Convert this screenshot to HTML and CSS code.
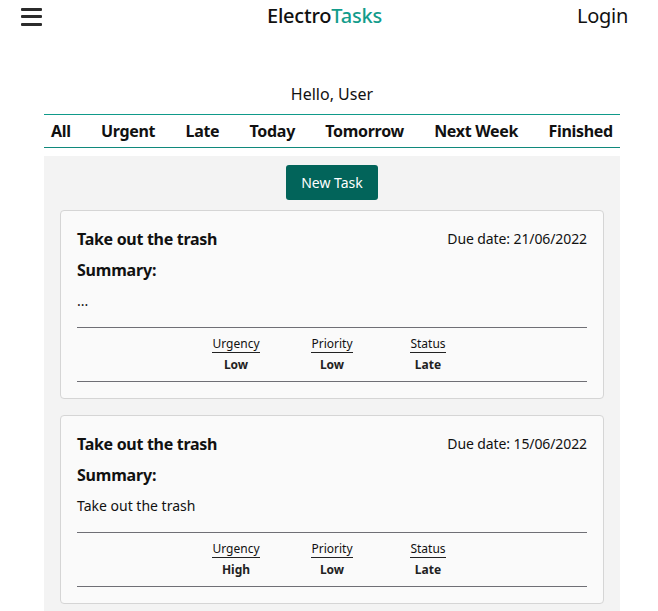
FILE: index.html
```html
<!DOCTYPE html>
<html lang="en">
<head>
<meta charset="utf-8">
<title>ElectroTasks</title>
<link rel="stylesheet" href="styles.css">
</head>
<body>
<header class="topbar">
  <button class="menu-btn" aria-label="Menu">
    <span class="bar"></span><span class="bar"></span><span class="bar"></span>
  </button>
  <div class="brand">Electro<span class="brand-accent">Tasks</span></div>
  <a class="login" href="#">Login</a>
</header>
<main class="main">
  <p class="greeting">Hello, User</p>
  <nav class="tabs">
    <a href="#" class="tab">All</a>
    <a href="#" class="tab">Urgent</a>
    <a href="#" class="tab">Late</a>
    <a href="#" class="tab">Today</a>
    <a href="#" class="tab">Tomorrow</a>
    <a href="#" class="tab">Next Week</a>
    <a href="#" class="tab">Finished</a>
  </nav>
  <section class="board">
    <button class="new-task">New Task</button>
    <article class="card">
      <div class="card-head">
        <h2 class="card-title">Take out the trash</h2>
        <span class="due">Due date: 21/06/2022</span>
      </div>
      <h3 class="summary-label">Summary:</h3>
      <p class="summary">...</p>
      <div class="stats">
        <div class="stat"><span class="stat-label">Urgency</span><span class="stat-value">Low</span></div>
        <div class="stat"><span class="stat-label">Priority</span><span class="stat-value">Low</span></div>
        <div class="stat"><span class="stat-label">Status</span><span class="stat-value">Late</span></div>
      </div>
    </article>
    <article class="card">
      <div class="card-head">
        <h2 class="card-title">Take out the trash</h2>
        <span class="due">Due date: 15/06/2022</span>
      </div>
      <h3 class="summary-label">Summary:</h3>
      <p class="summary">Take out the trash</p>
      <div class="stats">
        <div class="stat"><span class="stat-label">Urgency</span><span class="stat-value">High</span></div>
        <div class="stat"><span class="stat-label">Priority</span><span class="stat-value">Low</span></div>
        <div class="stat"><span class="stat-label">Status</span><span class="stat-value">Late</span></div>
      </div>
    </article>
  </section>
</main>
</body>
</html>
```
FILE: styles.css
```css
* { box-sizing: border-box; }
html, body { margin: 0; padding: 0; background: #fff; }
body {
  font-family: "Noto Sans", "Open Sans", sans-serif;
  color: #111;
}
.topbar {
  display: grid;
  grid-template-columns: 1fr auto 1fr;
  align-items: center;
  height: 32px;
  padding: 0 30px 0 21px;
}
.menu-btn {
  justify-self: start;
  display: flex;
  flex-direction: column;
  gap: 4.5px;
  width: 21px;
  padding: 0;
  margin-top: 1px;
  border: 0;
  background: none;
}
.bar {
  display: block;
  height: 3px;
  width: 21px;
  background: #2b2b2b;
  border-radius: 1px;
}
.brand {
  font-size: 20px;
  line-height: 24px;
  font-weight: 500;
  letter-spacing: -0.2px;
  color: #111;
}
.brand-accent { color: #139c8c; }
.login {
  justify-self: end;
  font-size: 20px;
  line-height: 24px;
  letter-spacing: -0.3px;
  color: #111;
  text-decoration: none;
}
.main {
  margin: 0 38px 0 44px;
}
.greeting {
  margin: 50px 0 8px;
  text-align: center;
  font-size: 16px;
  line-height: 24px;
}
.tabs {
  display: flex;
  justify-content: space-between;
  align-items: center;
  height: 34px;
  padding: 0 7px;
  border-top: 1px solid #0f9a8a;
  border-bottom: 1px solid #10897c;
}
.tab {
  font-size: 16px;
  font-weight: 700;
  letter-spacing: -0.3px;
  color: #111;
  text-decoration: none;
}
.board {
  margin-top: 8px;
  background: #f3f3f3;
  padding: 9px 16px 8px;
  display: flex;
  flex-direction: column;
  gap: 16px;
}
.new-task {
  align-self: center;
  width: 92px;
  height: 35px;
  margin-bottom: -6px;
  border: 0;
  border-radius: 3px;
  background: #02645a;
  color: #fff;
  font-family: inherit;
  font-size: 14px;
}
.card {
  background: #fafafa;
  border: 1px solid #d5d5d5;
  border-radius: 4px;
  padding: 16px;
}
.card-head {
  display: flex;
  justify-content: space-between;
  align-items: center;
  height: 24px;
}
.card-title {
  margin: 0;
  font-size: 16px;
  font-weight: 700;
  line-height: 24px;
  letter-spacing: -0.3px;
}
.due {
  font-size: 14px;
  line-height: 24px;
  letter-spacing: -0.1px;
}
.summary-label {
  margin: 7px 0 0;
  font-size: 16px;
  font-weight: 700;
  line-height: 24px;
  letter-spacing: -0.2px;
}
.summary {
  margin: 8px 0 0;
  font-size: 14px;
  line-height: 22px;
}
.stats {
  margin-top: 15px;
  border-top: 1px solid #6f6f75;
  border-bottom: 1px solid #6f6f75;
  padding: 8px 0 8px;
  display: flex;
  justify-content: center;
}
.stat {
  width: 96px;
  display: flex;
  flex-direction: column;
  align-items: center;
}
.stat-label {
  font-size: 12px;
  line-height: 16px;
  border-bottom: 1px solid #222;
}
.stat-value {
  margin-top: 4px;
  font-size: 12px;
  line-height: 16px;
  font-weight: 700;
  color: #222;
}
```
